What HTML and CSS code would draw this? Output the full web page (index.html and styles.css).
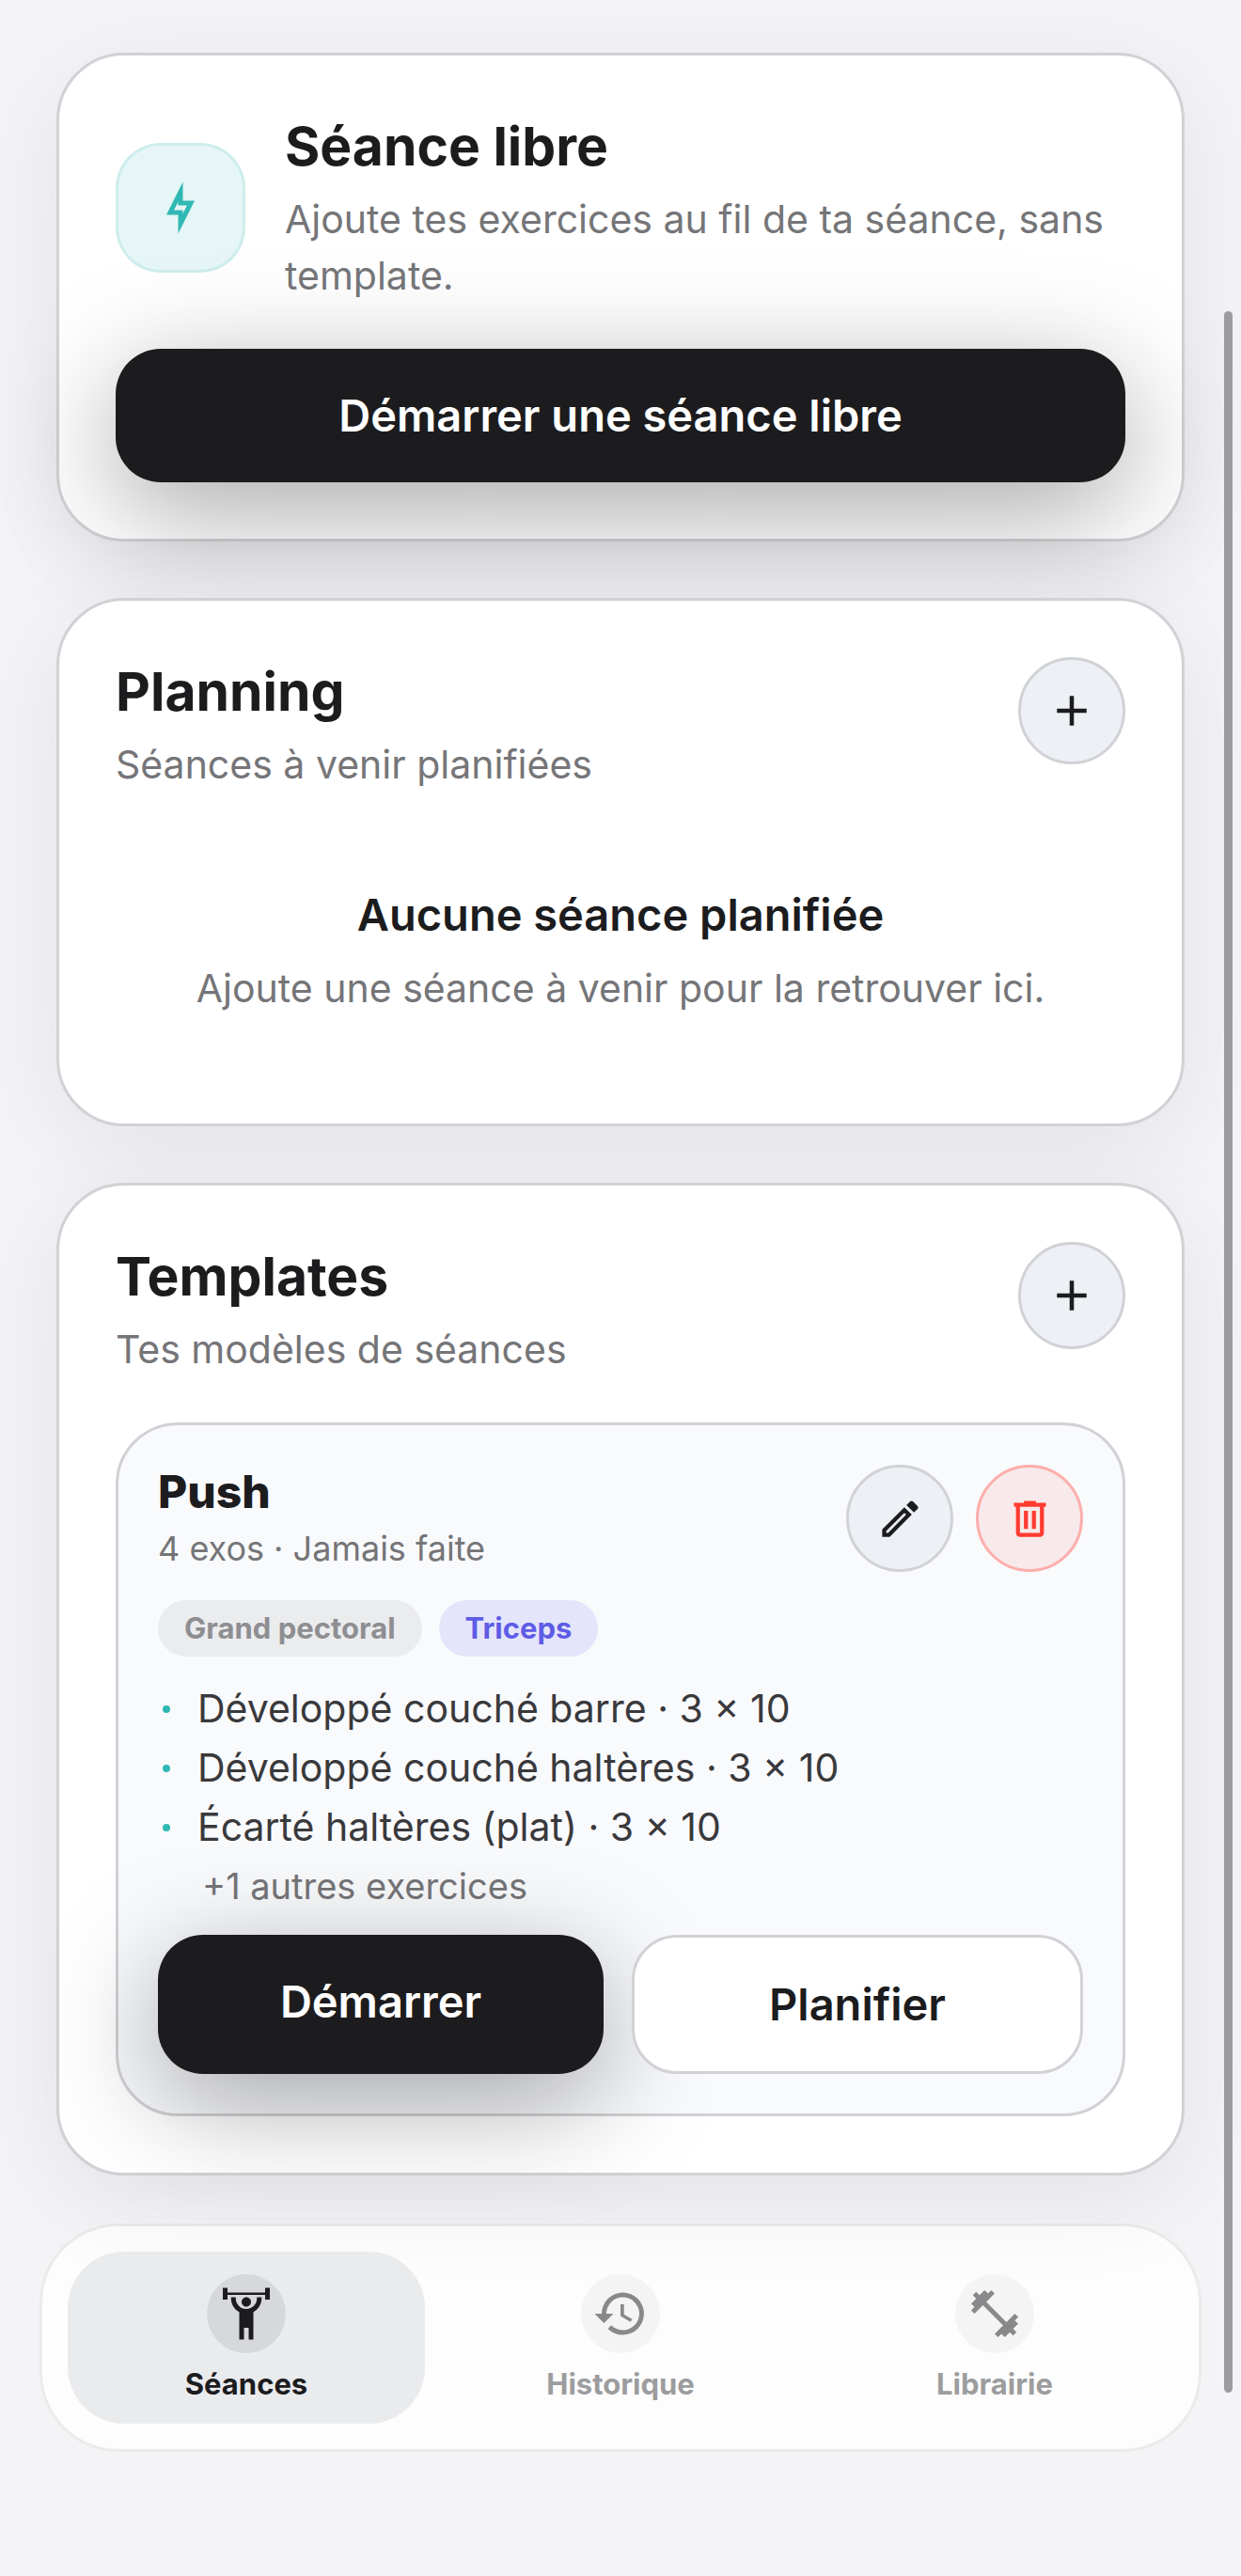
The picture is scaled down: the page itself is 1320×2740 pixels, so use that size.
FILE: index.html
```html
<!DOCTYPE html>
<html lang="fr">

<head>
  <meta charset="UTF-8" />
  <meta name="viewport" content="width=device-width, initial-scale=1.0" />
  <title>Séances</title>
  <link rel="stylesheet" href="styles.css">
</head>

<body>
  <main class="content">
    <section class="card">
      <div class="free-session">
        <div class="bolt-box">
          <svg class="icon-lg" viewBox="0 0 24 24" aria-hidden="true"><path d="M11 9.47V11H14.76L13 14.53V13H9.24L11 9.47M13 1L6 15H11V23L18 9H13V1Z"/></svg>
        </div>
        <div class="heading">
          <h2 class="title">Séance libre</h2>
          <p class="subtitle">Ajoute tes exercices au fil de ta séance, sans template.</p>
        </div>
      </div>
      <button class="btn btn-primary btn-block" type="button">Démarrer une séance libre</button>
    </section>

    <section class="card">
      <div class="card-header">
        <div class="heading">
          <h2 class="title">Planning</h2>
          <p class="subtitle">Séances à venir planifiées</p>
        </div>
        <button class="round-btn" type="button" aria-label="Planifier une séance">
          <svg class="icon-md" viewBox="0 0 24 24" aria-hidden="true"><path d="M19 13H13V19H11V13H5V11H11V5H13V11H19V13Z"/></svg>
        </button>
      </div>
      <div class="empty">
        <h3 class="empty-title">Aucune séance planifiée</h3>
        <p class="subtitle">Ajoute une séance à venir pour la retrouver ici.</p>
      </div>
    </section>

    <section class="card">
      <div class="card-header">
        <div class="heading">
          <h2 class="title">Templates</h2>
          <p class="subtitle">Tes modèles de séances</p>
        </div>
        <button class="round-btn" type="button" aria-label="Ajouter un template">
          <svg class="icon-md" viewBox="0 0 24 24" aria-hidden="true"><path d="M19 13H13V19H11V13H5V11H11V5H13V11H19V13Z"/></svg>
        </button>
      </div>

      <article class="template">
        <div class="template-header">
          <div class="heading">
            <h3 class="template-name">Push</h3>
            <p class="meta">4 exos · Jamais faite</p>
          </div>
          <div class="template-tools">
            <button class="round-btn" type="button" aria-label="Modifier">
              <svg class="icon-sm" viewBox="0 0 24 24" aria-hidden="true"><path d="M14.06,9L15,9.94L5.92,19H5V18.08L14.06,9M17.66,3C17.41,3 17.15,3.1 16.96,3.29L15.13,5.12L18.88,8.87L20.71,7.04C21.1,6.65 21.1,6 20.71,5.63L18.37,3.29C18.17,3.09 17.92,3 17.66,3M14.06,6.19L3,17.25V21H6.75L17.81,9.94L14.06,6.19Z"/></svg>
            </button>
            <button class="round-btn danger" type="button" aria-label="Supprimer">
              <svg class="icon-sm" viewBox="0 0 24 24" aria-hidden="true"><path d="M9,3V4H4V6H5V19A2,2 0 0,0 7,21H17A2,2 0 0,0 19,19V6H20V4H15V3H9M7,6H17V19H7V6M9,8V17H11V8H9M13,8V17H15V8H13Z"/></svg>
            </button>
          </div>
        </div>

        <div class="tags">
          <span class="tag">Grand pectoral</span>
          <span class="tag tag-violet">Triceps</span>
        </div>

        <ul class="exercises">
          <li>Développé couché barre · 3 × 10</li>
          <li>Développé couché haltères · 3 × 10</li>
          <li>Écarté haltères (plat) · 3 × 10</li>
        </ul>
        <p class="more">+1 autres exercices</p>

        <div class="actions">
          <button class="btn btn-primary" type="button">Démarrer</button>
          <button class="btn btn-secondary" type="button">Planifier</button>
        </div>
      </article>
    </section>
  </main>

  <nav class="tabbar">
    <a class="tab active" href="#seances" aria-current="page">
      <span class="tab-icon">
        <svg class="icon-lg" viewBox="0 0 24 24" aria-hidden="true"><path d="M12 5C10.89 5 10 5.89 10 7S10.89 9 12 9 14 8.11 14 7 13.11 5 12 5M22 1V6H20V4H4V6H2V1H4V3H20V1H22M15 11.26V23H13V18H11V23H9V11.26C6.93 10.17 5.5 8 5.5 5.5L5.5 5H7.5L7.5 5.5C7.5 8 9.5 10 12 10S16.5 8 16.5 5.5L16.5 5H18.5L18.5 5.5C18.5 8 17.07 10.17 15 11.26Z"/></svg>
      </span>
      Séances
    </a>
    <a class="tab" href="#historique">
      <span class="tab-icon">
        <svg class="icon-lg" viewBox="0 0 24 24" aria-hidden="true"><path d="M13.5,8H12V13L16.28,15.54L17,14.33L13.5,12.25V8M13,3A9,9 0 0,0 4,12H1L4.96,16.03L9,12H6A7,7 0 0,1 13,5A7,7 0 0,1 20,12A7,7 0 0,1 13,19C11.07,19 9.32,18.21 8.06,16.94L6.64,18.36C8.27,20 10.5,21 13,21A9,9 0 0,0 22,12A9,9 0 0,0 13,3"/></svg>
      </span>
      Historique
    </a>
    <a class="tab" href="#librairie">
      <span class="tab-icon">
        <svg class="icon-lg" viewBox="0 0 24 24" aria-hidden="true"><path d="M20.57,14.86L22,13.43L20.57,12L17,15.57L8.43,7L12,3.43L10.57,2L9.14,3.43L7.71,2L5.57,4.14L4.14,2.71L2.71,4.14L4.14,5.57L2,7.71L3.43,9.14L2,10.57L3.43,12L7,8.43L15.57,17L12,20.57L13.43,22L14.86,20.57L16.29,22L18.43,19.86L19.86,21.29L21.29,19.86L19.86,18.43L22,16.29L20.57,14.86Z"/></svg>
      </span>
      Librairie
    </a>
  </nav>

  <div class="scroll-thumb"></div>
</body>

</html>
```

FILE: styles.css
```css
* {
  box-sizing: border-box;
}

body {
  margin: 0;
  padding: 56px 0 132px;
  font-family: Inter, "Liberation Sans", sans-serif;
  background-color: #f4f4f7;
  color: #1c1c1e;
}

h2,
h3,
p,
ul {
  margin: 0;
  padding: 0;
}

button {
  font-family: inherit;
  color: inherit;
  cursor: pointer;
}

svg {
  display: block;
  fill: currentColor;
}

.icon-lg {
  width: 60px;
  height: 60px;
}

.icon-md {
  width: 54px;
  height: 54px;
}

.icon-sm {
  width: 51px;
  height: 51px;
}

/* Cards */
.content {
  display: flex;
  flex-direction: column;
  gap: 60px;
  padding: 0 60px;
}

.card {
  padding: 60px;
  background-color: #fff;
  border: 3px solid #d1d1d6;
  border-radius: 72px;
  box-shadow: 0 24px 108px rgba(0, 0, 0, 0.07);
}

.card-header,
.template-header {
  display: flex;
  align-items: flex-start;
  justify-content: space-between;
}

.card-header {
  margin-bottom: 48px;
}

.title {
  font-size: 57px;
  line-height: 74px;
  font-weight: 700;
  margin-bottom: 10px;
}

.subtitle {
  font-size: 41px;
  line-height: 60px;
  color: #757578;
}

.free-session {
  display: flex;
  align-items: center;
  gap: 42px;
  margin-bottom: 48px;
}

.free-session .heading {
  flex: 1;
}

.bolt-box {
  display: flex;
  align-items: center;
  justify-content: center;
  width: 138px;
  height: 138px;
  color: #30b8b4;
  background-color: rgba(48, 184, 180, 0.12);
  border: 3px solid rgba(48, 184, 180, 0.14);
  border-radius: 48px;
}

.empty {
  padding: 52px 0 54px;
  text-align: center;
}

.empty-title {
  font-size: 47px;
  line-height: 60px;
  font-weight: 600;
  margin-bottom: 18px;
}

/* Buttons */
.btn {
  display: flex;
  justify-content: center;
  padding: 42px;
  border: none;
  border-radius: 48px;
  font-size: 47px;
  line-height: 58px;
  font-weight: 600;
}

.btn-primary {
  background-color: #1c1c1e;
  color: #fff;
  box-shadow: 0 30px 120px rgba(0, 0, 0, 0.35);
}

.btn-secondary {
  background-color: #fff;
  border: 3px solid #d1d1d6;
}

.btn-block {
  width: 100%;
}

.round-btn {
  display: flex;
  align-items: center;
  justify-content: center;
  width: 114px;
  height: 114px;
  padding: 0;
  background-color: #edf1f6;
  border: 3px solid #d1d1d6;
  border-radius: 50%;
}

.round-btn.danger {
  color: #ff3b30;
  background-color: #f8e9ea;
  border-color: #fdaeab;
}

/* Template */
.template {
  padding: 42px;
  background-color: #f9fafc;
  border: 3px solid #d1d1d6;
  border-radius: 66px;
}

.template-name {
  font-size: 48px;
  line-height: 58px;
  font-weight: 800;
}

.meta {
  font-size: 36px;
  line-height: 62px;
  color: #757578;
}

.template-tools {
  display: flex;
  gap: 24px;
}

.tags {
  display: flex;
  gap: 18px;
  margin: 24px 0;
}

.tag {
  padding: 0 28px;
  border-radius: 30px;
  font-size: 31px;
  line-height: 60px;
  font-weight: 700;
  color: #8e8e92;
  background-color: #ebecee;
}

.tag-violet {
  color: #5e5ce6;
  background-color: #e4e4fa;
}

.exercises {
  list-style: none;
  font-size: 41px;
  line-height: 63px;
  color: #39393c;
}

.exercises li {
  display: flex;
  align-items: center;
  gap: 29px;
  padding-left: 5px;
}

.exercises li::before {
  content: "";
  width: 8px;
  height: 8px;
  border-radius: 50%;
  background-color: #30b8b4;
}

.more {
  padding-left: 47px;
  font-size: 38px;
  line-height: 63px;
  color: #757578;
}

.actions {
  display: flex;
  gap: 30px;
  margin-top: 20px;
}

.actions .btn {
  flex: 1;
}

/* Bottom navigation */
.tabbar {
  display: flex;
  gap: 18px;
  margin: 51px 42px 0;
  padding: 27px;
  background-color: #fdfdfd;
  border: 3px solid #ebebec;
  border-radius: 84px;
}

.tab {
  display: flex;
  flex: 1;
  flex-direction: column;
  align-items: center;
  gap: 15px;
  padding: 24px 0;
  border-radius: 60px;
  font-size: 31px;
  line-height: 36px;
  font-weight: 700;
  color: #9c9c9e;
  text-decoration: none;
}

.tab.active {
  color: #1c1c1e;
  background-color: #eaebed;
}

.tab-icon {
  display: flex;
  align-items: center;
  justify-content: center;
  width: 84px;
  height: 84px;
  border-radius: 50%;
  color: #89898b;
  background-color: #f4f4f5;
}

.active .tab-icon {
  color: #1c1c1e;
  background-color: #d7d8db;
}

.scroll-thumb {
  position: fixed;
  top: 331px;
  right: 9px;
  bottom: 195px;
  width: 9px;
  border-radius: 5px;
  background-color: #9c9c9e;
}
```
